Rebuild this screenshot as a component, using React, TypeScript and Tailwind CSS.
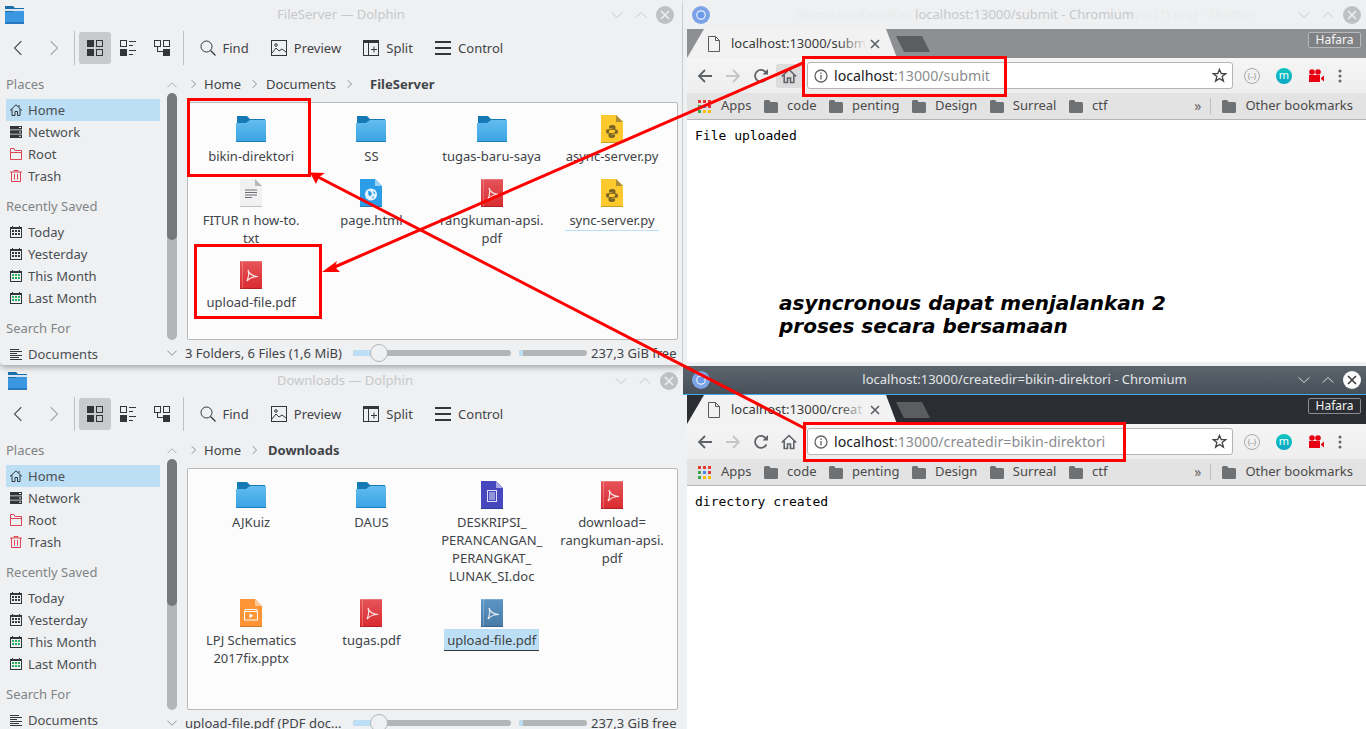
import type { ReactNode } from 'react';

type FileKind = 'folder' | 'pdf' | 'pdfsel' | 'py' | 'txt' | 'html' | 'doc' | 'pptx';

interface FileItem {
  name: string;
  kind: FileKind;
  hover?: boolean;
  selected?: boolean;
}

const TOP_FILES: FileItem[] = [
  { name: 'bikin-direktori', kind: 'folder' },
  { name: 'SS', kind: 'folder' },
  { name: 'tugas-baru-saya', kind: 'folder' },
  { name: 'async-server.py', kind: 'py' },
  { name: 'FITUR n how-to.\ntxt', kind: 'txt' },
  { name: 'page.html', kind: 'html' },
  { name: 'rangkuman-apsi.\npdf', kind: 'pdf' },
  { name: 'sync-server.py', kind: 'py', hover: true },
  { name: 'upload-file.pdf', kind: 'pdf' },
];

const BOTTOM_FILES: FileItem[] = [
  { name: 'AJKuiz', kind: 'folder' },
  { name: 'DAUS', kind: 'folder' },
  { name: 'DESKRIPSI_\nPERANCANGAN_\nPERANGKAT_\nLUNAK_SI.doc', kind: 'doc' },
  { name: 'download=\nrangkuman-apsi.\npdf', kind: 'pdf' },
  { name: 'LPJ Schematics\n2017fix.pptx', kind: 'pptx' },
  { name: 'tugas.pdf', kind: 'pdf' },
  { name: 'upload-file.pdf', kind: 'pdfsel', selected: true },
];

const BOOKMARKS = ['code', 'penting', 'Design', 'Surreal', 'ctf'];

function PageShape({ color, fold, children }: { color: string; fold: string; children?: ReactNode }) {
  return (
    <svg width="22" height="28" viewBox="0 0 22 28">
      <path d="M0 0H15L22 7V28H0Z" fill={color} />
      <path d="M0 27H22V28H0Z" fill="#000" opacity="0.2" />
      <path d="M15 0L22 7H15Z" fill={fold} />
      {children}
    </svg>
  );
}

function PdfIcon({ color, top }: { color: string; top: string }) {
  return (
    <svg width="22" height="28" viewBox="0 0 22 28">
      <defs>
        <linearGradient id={`pdf${color.slice(1)}`} x1="0" y1="0" x2="0" y2="1">
          <stop offset="0" stopColor={top} />
          <stop offset="1" stopColor={color} />
        </linearGradient>
      </defs>
      <rect width="22" height="28" fill={`url(#pdf${color.slice(1)})`} />
      <rect width="22" height="1" fill="#fff" opacity="0.2" />
      <rect x="2" width="1" height="28" fill="#fff" opacity="0.25" />
      <rect y="27" width="22" height="1" fill="#000" opacity="0.2" />
      <path d="M8 9C9 13 12 15 18 15.500C13 15.500 10 16.500 7 20C8.500 16.500 9.500 13 8 9Z" fill="none" stroke="#fff" strokeWidth="1.200" opacity="0.85" />
    </svg>
  );
}

const PY_HALF = 'M11 10C8.500 10 8 11 8 12V13.500H11.500V14.200H6.500C5.500 14.200 5 15 5 16.200C5 17.500 5.500 18.500 6.500 18.500H8V16.500C8 15.500 9 15 10 15H13C14 15 14.500 14.500 14.500 13.500V12C14.500 10.500 13 10 11 10Z';

function FileIcon({ kind }: { kind: FileKind }) {
  if (kind === 'folder') {
    return (
      <svg width="30" height="26" viewBox="0 0 30 26">
        <defs>
          <linearGradient id="fold" x1="0" y1="0" x2="0" y2="1">
            <stop offset="0" stopColor="#62bcf0" />
            <stop offset="1" stopColor="#3aa3e3" />
          </linearGradient>
        </defs>
        <path d="M1 0H11L14 3H29V8H1Z" fill="#1479b5" />
        <path d="M0 7H10L14 4H30V26H0Z" fill="url(#fold)" />
        <rect y="25" width="30" height="1" fill="#1a80bf" />
      </svg>
    );
  }
  if (kind === 'pdf') return <PdfIcon color="#d92b2f" top="#e5555a" />;
  if (kind === 'pdfsel') return <PdfIcon color="#487aa6" top="#5b96c6" />;
  if (kind === 'py') {
    return (
      <PageShape color="#fdc92c" fold="#a88c3a">
        <g fill="#7d6526">
          <path d={PY_HALF} />
          <path d={PY_HALF} transform="rotate(180 11 16.500)" />
        </g>
      </PageShape>
    );
  }
  if (kind === 'txt') {
    return (
      <PageShape color="#f1f1f1" fold="#b8b8b8">
        <path d="M5 11H17M5 13.500H17M5 16H17M5 18.500H12" stroke="#6b6f73" strokeWidth="1" />
      </PageShape>
    );
  }
  if (kind === 'html') {
    return (
      <PageShape color="#2b9de6" fold="#9ad1f4">
        <circle cx="11" cy="15.500" r="6" fill="#e6f4fd" />
        <path d="M8 12L11 12.500L12 15L10 17.500L8.500 16ZM13 11.500L15.500 14L14 15.500ZM12 18L14 17L13 20Z" fill="#2b9de6" />
      </PageShape>
    );
  }
  if (kind === 'doc') {
    return (
      <PageShape color="#4547bd" fold="#a9a9e6">
        <rect x="6.500" y="9.500" width="9" height="11" fill="none" stroke="#dfe0f7" strokeWidth="1" />
        <path d="M8 12H14M8 14H14M8 16H14M8 18H14" stroke="#dfe0f7" strokeWidth="1" />
      </PageShape>
    );
  }
  return (
    <PageShape color="#fd9537" fold="#fdc795">
      <path d="M5 12.500V10.500H17V12.500M4.500 12.500H17.500V21H4.500Z" fill="none" stroke="#fff" strokeWidth="1" />
      <path d="M9.500 14.500L13.500 16.700L9.500 19Z" fill="#fff" />
    </PageShape>
  );
}

function Chevron({ dir, className }: { dir: 'left' | 'right' | 'up' | 'down'; className?: string }) {
  const d = {
    left: 'M10 2L4 8L10 14',
    right: 'M6 2L12 8L6 14',
    up: 'M2 11L8 5L14 11',
    down: 'M2 5L8 11L14 5',
  }[dir];
  return (
    <svg viewBox="0 0 16 16" className={className} fill="none" stroke="currentColor" strokeWidth="1">
      <path d={d} />
    </svg>
  );
}

function WinButtons({ dark }: { dark?: boolean }) {
  return (
    <div className={`flex items-center justify-end gap-[10px] ${dark ? 'text-[#eff0f1]' : 'text-[#bdc1c4]'}`}>
      <Chevron dir="down" className="w-[14px] h-[14px]" />
      <Chevron dir="up" className="w-[14px] h-[14px]" />
      <svg viewBox="0 0 18 18" className="w-[18px] h-[18px] -ml-[2px]">
        <circle cx="9" cy="9" r="9" fill={dark ? '#fcfcfc' : '#bdc1c4'} />
        <path d="M5 5L13 13M13 5L5 13" stroke={dark ? '#31363b' : '#eff0f1'} strokeWidth="1.500" />
      </svg>
    </div>
  );
}

function TitleFolder() {
  return (
    <svg width="19" height="18" viewBox="0 0 19 18">
      <path d="M0 0H8L10 2H19V6H0Z" fill="#1b6ea8" />
      <rect y="3" width="19" height="2" fill="#d7e6f2" />
      <path d="M0 6H7L9 5H19V18H0Z" fill="#3a97e0" />
      <rect y="16" width="19" height="2" fill="#2a78c0" />
    </svg>
  );
}

function ViewIcon({ type }: { type: 'icons' | 'compact' | 'details' }) {
  return (
    <svg viewBox="0 0 16 16" className="w-4 h-4" fill="#31363b">
      {type === 'icons' && (
        <path fillRule="evenodd" d="M0 0H7V7H0ZM9 0H16V7H9ZM10 1V6H15V1ZM0 9H7V16H0ZM9 9H16V16H9ZM10 10V15H15V10Z" />
      )}
      {type === 'compact' && (
        <path fillRule="evenodd" d="M0 0H7V7H0ZM1 1V6H6V1ZM9 1H16V2H9ZM9 5H13V6H9ZM0 9H7V16H0ZM9 10H16V11H9ZM9 14H13V15H9Z" />
      )}
      {type === 'details' && (
        <path fillRule="evenodd" d="M0 0H7V7H0ZM1 1V6H6V1ZM9 0H16V7H9ZM10 1V6H15V1ZM3 7H4V11H9V9H16V16H9V12H3Z" />
      )}
    </svg>
  );
}

function ToolAction({ label, icon }: { label: string; icon: ReactNode }) {
  return (
    <div className="flex items-center gap-[7px] text-[#3f4449]">
      {icon}
      <span className="pt-[2px]">{label}</span>
    </div>
  );
}

function DolphinToolbar() {
  return (
    <div className="h-[37px] flex items-center pl-[2px] text-[13px] shrink-0">
      <div className="w-[34px] flex justify-center text-[#4d5257]">
        <Chevron dir="left" className="w-[18px] h-[18px]" />
      </div>
      <div className="w-[34px] flex justify-center text-[#a5a8ab]">
        <Chevron dir="right" className="w-[18px] h-[18px]" />
      </div>
      <div className="w-px h-[34px] bg-[#bdc1c4] ml-[4px]" />
      <div className="w-[32px] h-[32px] rounded-[3px] bg-[#c9cacb] ml-[4px] flex items-center justify-center">
        <ViewIcon type="icons" />
      </div>
      <div className="w-[34px] flex justify-center">
        <ViewIcon type="compact" />
      </div>
      <div className="w-[34px] flex justify-center">
        <ViewIcon type="details" />
      </div>
      <div className="w-px h-[34px] bg-[#bdc1c4] ml-[4px]" />
      <div className="flex items-center gap-[22.2px] ml-[15.500px]">
        <ToolAction
          label="Find"
          icon={
            <svg viewBox="0 0 16 16" className="w-4 h-4" fill="none" stroke="#31363b" strokeWidth="1">
              <circle cx="6.500" cy="6.500" r="5.500" />
              <path d="M10.500 10.500L15.500 15.500" strokeWidth="1.300" />
            </svg>
          }
        />
        <ToolAction
          label="Preview"
          icon={
            <svg viewBox="0 0 16 16" className="w-4 h-4" fill="none" stroke="#31363b" strokeWidth="1">
              <rect x="0.500" y="0.500" width="15" height="15" />
              <path d="M1 13L5 8L8 11L11 9L15 12" />
              <circle cx="5" cy="5" r="1.300" />
            </svg>
          }
        />
        <ToolAction
          label="Split"
          icon={
            <svg viewBox="0 0 16 16" className="w-4 h-4" fill="none" stroke="#31363b" strokeWidth="1">
              <rect x="0.500" y="0.500" width="15" height="15" />
              <path d="M5.500 3V16M8 9.500H14M11 6.500V12.500" />
              <rect x="0" y="0" width="16" height="3" fill="#31363b" stroke="none" />
            </svg>
          }
        />
        <ToolAction
          label="Control"
          icon={
            <svg viewBox="0 0 16 16" className="w-4 h-4" fill="#31363b">
              <path d="M0 1H16V3H0ZM0 7H16V9H0ZM0 13H16V15H0Z" />
            </svg>
          }
        />
      </div>
    </div>
  );
}

function PlaceIcon({ type }: { type: string }) {
  if (type === 'home') {
    return (
      <svg viewBox="0 0 12 12" className="w-3 h-3" fill="none" stroke="#31363b" strokeWidth="1">
        <path d="M0 6.500L6 0.800L12 6.500M2 5V11.500H5V7.500H7.500V11.500H10V5M9 1V3" />
      </svg>
    );
  }
  if (type === 'network') {
    return (
      <svg viewBox="0 0 12 12" className="w-3 h-3" fill="#31363b">
        <path d="M0 0H12V3.500H0ZM0 4.250H12V7.750H0ZM0 8.500H12V12H0Z" />
        <path d="M9 1H11V2H9ZM9 5.500H11V6.500H9ZM9 9.800H11V10.800H9Z" fill="#eff0f1" />
      </svg>
    );
  }
  if (type === 'root') {
    return (
      <svg viewBox="0 0 12 12" className="w-3 h-3" fill="none" stroke="#da4453" strokeWidth="1">
        <path d="M0.500 1V11.500H11.500V2.500H5L4 0.500H0.500ZM0.500 4.500H11.500" />
      </svg>
    );
  }
  if (type === 'trash') {
    return (
      <svg viewBox="0 0 12 12" className="w-3 h-3" fill="none" stroke="#da4453" strokeWidth="1">
        <path d="M0 2H12M4 2V0.500H8V2M1.500 2V11.500H10.500V2M4.500 4V9.500M7.500 4V9.500" />
      </svg>
    );
  }
  if (type === 'docs') {
    return (
      <svg viewBox="0 0 12 12" className="w-3 h-3" fill="none" stroke="#31363b" strokeWidth="1">
        <path d="M0 1.500H9M0 3.500H12M0 5.500H7M0 7.500H12M0 9.500H9M0 11.500H12" />
      </svg>
    );
  }
  const cell = type === 'cal-green' ? '#27ae60' : '#31363b';
  return (
    <svg viewBox="0 0 12 12" className="w-3 h-3">
      <path fillRule="evenodd" d="M0 1H2V0H3V1H9V0H10V1H12V12H0ZM1 3V11H11V3Z" fill="#31363b" />
      <path d="M2 4H4V6H2ZM5 4H7V6H5ZM8 4H10V6H8ZM2 7H4V9H2ZM5 7H7V9H5ZM8 7H10V9H8Z" fill={cell} />
    </svg>
  );
}

function PlaceSection({ title, rows, active }: { title: string; rows: [string, string][]; active?: string }) {
  return (
    <div className="mb-[10px]">
      <div className="h-[18px] leading-[18px] text-[#7f8486] mb-[6px]">{title}</div>
      {rows.map(([label, icon]) => (
        <div
          key={label}
          className={`h-[22px] w-[154px] flex items-center gap-[6px] pl-[4px] text-[#4a4f54] ${active === label ? 'bg-[#bddff5]' : ''}`}
        >
          <PlaceIcon type={icon} />
          <span className="leading-[18px]">{label}</span>
        </div>
      ))}
    </div>
  );
}

function Sidebar() {
  return (
    <div className="w-[167px] shrink-0 pl-[6px] pt-[9px] text-[13px] overflow-hidden">
      <PlaceSection
        title="Places"
        active="Home"
        rows={[
          ['Home', 'home'],
          ['Network', 'network'],
          ['Root', 'root'],
          ['Trash', 'trash'],
        ]}
      />
      <PlaceSection
        title="Recently Saved"
        rows={[
          ['Today', 'cal'],
          ['Yesterday', 'cal'],
          ['This Month', 'cal-green'],
          ['Last Month', 'cal-green'],
        ]}
      />
      <PlaceSection title="Search For" rows={[['Documents', 'docs']]} />
    </div>
  );
}

function SideScroll() {
  return (
    <div className="w-[10px] shrink-0 mr-[8px] flex flex-col items-center text-[#6b7075]">
      <div className="h-[27px] flex items-end pb-[2px] text-[#9a9da0]">
        <Chevron dir="up" className="w-[12px] h-[12px] -mx-[1px]" />
      </div>
      <div className="flex-1 w-[10px] rounded-[5px] bg-[#b4b5b6] overflow-hidden">
        <div className="h-[147px] rounded-[5px] bg-[#77787c]" />
      </div>
      <div className="h-[25px] flex items-center">
        <Chevron dir="down" className="w-[12px] h-[12px] -mx-[1px]" />
      </div>
    </div>
  );
}

function FileCell({ item }: { item: FileItem }) {
  let label = 'mt-[4px] px-[3px]';
  if (item.selected) label = 'mt-[2px] pt-[2px] pb-[1px] px-[3px] bg-[#bddff5] border-b border-[#31363b]';
  if (item.hover) label = 'mt-[4px] px-[4px] pb-[1px] border-b border-[#bddff5]';
  return (
    <div className="flex flex-col items-center pb-[14px]">
      <div className="h-[28px] flex items-end">
        <div className={item.kind === 'folder' ? 'mb-[1px]' : ''}>
          <FileIcon kind={item.kind} />
        </div>
      </div>
      <div className={`text-center leading-[18px] whitespace-pre-line text-[#3f4449] ${label}`}>{item.name}</div>
    </div>
  );
}

function Breadcrumb({ path, current, currentClass }: { path: string[]; current: string; currentClass: string }) {
  return (
    <div className="h-[36px] shrink-0 flex items-center text-[13px] text-[#3f4449] pl-[3px]">
      <Chevron dir="right" className="w-[10px] h-[10px] text-[#4d5257] mr-[6px]" />
      {path.map(p => (
        <div key={p} className="flex items-center">
          <span className="pt-[2px]">{p}</span>
          <Chevron dir="right" className="w-[10px] h-[10px] text-[#4d5257] mx-[7.500px]" />
        </div>
      ))}
      <span className={`font-bold pt-[2px] ${currentClass}`}>{current}</span>
    </div>
  );
}

function StatusBar({ text }: { text: string }) {
  return (
    <div className="h-[25px] shrink-0 flex items-center text-[13px] leading-[12px] text-[#3f4449]">
      <div className="w-[168px] whitespace-nowrap">{text}</div>
      <div className="relative w-[158px] h-[6px] rounded-[3px] bg-[#b4b5b6]">
        <div className="w-[26px] h-[6px] rounded-l-[3px] bg-[#bddff5]" />
        <div className="absolute left-[17px] -top-[6px] w-[18px] h-[18px] rounded-full bg-[#eff0f1] border border-[#b4b5b6]" />
      </div>
      <div className="ml-[8px] w-[68px] h-[6px] rounded-[3px] bg-[#b4b5b6] overflow-hidden">
        <div className="w-[4px] h-[6px] bg-[#bddff5]" />
      </div>
      <span className="ml-[4px] whitespace-nowrap">237,3 GiB free</span>
    </div>
  );
}

function DolphinWindow({
  title,
  path,
  current,
  currentClass,
  files,
  status,
  headClass,
  titleClass,
  rootClass,
}: {
  title: string;
  path: string[];
  current: string;
  currentClass: string;
  files: FileItem[];
  status: string;
  headClass: string;
  titleClass: string;
  rootClass: string;
}) {
  return (
    <div className={`absolute left-0 flex flex-col bg-[#eff0f1] font-['Noto_Sans',sans-serif] ${rootClass}`}>
      <div className={`h-[29px] shrink-0 grid grid-cols-[1fr_auto_1fr] items-center ${headClass}`}>
        <TitleFolder />
        <span className={`text-[13px] text-[#c6c9cb] ${titleClass}`}>{title}</span>
        <WinButtons />
      </div>
      <div className="w-[682px] flex-1 flex flex-col min-h-0">
        <DolphinToolbar />
        <div className="flex-1 flex min-h-0">
          <Sidebar />
          <SideScroll />
          <div className="flex-1 flex flex-col min-w-0 pr-[4px]">
            <Breadcrumb path={path} current={current} currentClass={currentClass} />
            <div className="flex-1 ml-[2px] bg-[#fcfcfc] border border-[#b8b9ba] rounded-[2px] pl-[3px] pt-[12px] overflow-hidden text-[13px]">
              <div className="grid grid-cols-[repeat(4,120.3px)]">
                {files.map(f => (
                  <FileCell key={f.name} item={f} />
                ))}
              </div>
            </div>
            <StatusBar text={status} />
          </div>
        </div>
      </div>
    </div>
  );
}

function ChromiumLogo() {
  return (
    <svg width="18" height="18" viewBox="0 0 18 18">
      <circle cx="9" cy="9" r="9" fill="#7ba3e6" />
      <circle cx="9" cy="9" r="4.800" fill="#e8eef9" />
      <circle cx="9" cy="9" r="3.600" fill="#6a9ae8" />
    </svg>
  );
}

function BookmarkFolder() {
  return (
    <svg width="14" height="13" viewBox="0 0 15 13" fill="#6f7275" preserveAspectRatio="none">
      <path d="M0 1.500Q0 0 1.500 0H5.500L7 2H13.500Q15 2 15 3.500V11.500Q15 13 13.500 13H1.500Q0 13 0 11.500Z" />
    </svg>
  );
}

function AppsGrid() {
  const colors = ['#e53935', '#e53935', '#e53935', '#43a047', '#4285f4', '#e53935', '#34a853', '#fbbc05', '#fbbc05'];
  return (
    <div className="grid grid-cols-3 gap-[2px] w-[13px]">
      {colors.map((c, i) => (
        <div key={i} className="w-[3px] h-[3px]" style={{ backgroundColor: c }} />
      ))}
    </div>
  );
}

function NavIcons({ hoverHome }: { hoverHome: boolean }) {
  return (
    <div className="flex items-center shrink-0 pl-[4px]">
      <div className="w-[28px] flex justify-center">
        <svg viewBox="0 0 16 16" className="w-4 h-4" fill="none" stroke="#5f6368" strokeWidth="1.800">
          <path d="M15 8H2M8 2L2 8L8 14" />
        </svg>
      </div>
      <div className="w-[28px] flex justify-center">
        <svg viewBox="0 0 16 16" className="w-4 h-4" fill="none" stroke="#c4c6c8" strokeWidth="1.800">
          <path d="M1 8H14M8 2L14 8L8 14" />
        </svg>
      </div>
      <div className="w-[28px] flex justify-center">
        <svg viewBox="0 0 16 16" className="w-4 h-4" fill="none" stroke="#5f6368" strokeWidth="1.800">
          <path d="M13.500 10.500A6 6 0 1 1 13 4.500" />
          <path d="M15 1V6.500H9.500Z" fill="#5f6368" stroke="none" />
        </svg>
      </div>
      <div className={`w-[26px] h-[24px] ml-[1px] rounded-[2px] flex items-center justify-center ${hoverHome ? 'bg-[#dcdcdc]' : ''}`}>
        <svg viewBox="0 0 16 16" className="w-4 h-4" fill="none" stroke="#5f6368" strokeWidth="1.600">
          <path d="M0.800 8.500L8 1.500L15.200 8.500M3.200 7V14.500H6.500V10H9.500V14.500H12.800V7" />
        </svg>
      </div>
    </div>
  );
}

function ChromiumWindow({
  host,
  rest,
  tabTitle,
  message,
  active,
  ghostBefore,
  ghostAfter,
  rootClass,
}: {
  host: string;
  rest: string;
  tabTitle: string;
  message: string;
  active?: boolean;
  ghostBefore?: string;
  ghostAfter?: string;
  rootClass: string;
}) {
  return (
    <div className={`absolute left-[683px] w-[683px] flex flex-col bg-[#eff0f1] font-['Noto_Sans',sans-serif] ${rootClass}`}>
      <div
        className={`h-[29px] shrink-0 grid grid-cols-[1fr_auto_1fr] items-center pl-[9px] pr-[5px] ${
          active ? 'bg-gradient-to-b from-[#5c646c] to-[#48505a] border-b border-[#3daee9]' : 'bg-[#eff0f1]'
        }`}
      >
        <ChromiumLogo />
        <span className={`relative text-[13px] pr-[4px] whitespace-nowrap ${active ? 'text-[#e3e5e7]' : 'text-[#c6c9cb]'}`}>
          {ghostBefore && <span className="absolute right-full top-0 text-[#e9ebec]">{ghostBefore}</span>}
          {`${host}${rest} - Chromium`}
          {ghostAfter && <span className="absolute left-full top-0 -ml-[4px] text-[#e9ebec]">{ghostAfter}</span>}
        </span>
        <WinButtons dark={active} />
      </div>
      <div className="flex-1 flex flex-col ml-[4px] min-h-0">
        <div className={`h-[29px] shrink-0 flex items-end justify-between pr-[5px] ${active ? 'bg-[#2a2e32]' : 'bg-[#8e8f92]'}`}>
          <div className="flex items-end">
            <div className="w-[210px] h-[29px] bg-[#f2f2f2] [clip-path:polygon(0_100%,17px_0,199px_0,210px_100%)] flex items-center pl-[20px]">
              <svg width="14" height="16" viewBox="0 0 14 16" fill="none" stroke="#5a5a5a" strokeWidth="1" className="shrink-0">
                <path d="M1.500 0.500H8.500L12.500 4.500V15.500H1.500ZM8.500 0.500V4.500H12.500" />
              </svg>
              <div className="relative ml-[10px] w-[136px] whitespace-nowrap text-[13px] text-[#3a3a3a]">
                {tabTitle}
                <div className="absolute right-0 inset-y-0 w-[28px] bg-gradient-to-r from-transparent to-[#f2f2f2]" />
              </div>
              <svg width="10" height="10" viewBox="0 0 10 10" stroke="#5f6368" strokeWidth="1.700" className="ml-[3px] shrink-0">
                <path d="M1 1L9 9M9 1L1 9" />
              </svg>
            </div>
            <div className="w-[34px] h-[16px] mb-[6px] -ml-[1px] bg-[#5c5d60] [clip-path:polygon(0_0,26px_0,34px_100%,8px_100%)]" />
          </div>
          <div
            className={`h-[16px] w-[53px] mb-[10px] rounded-[2px] border text-[12px] leading-[14px] text-center ${
              active ? 'border-[#8a8c8e] text-[#f2f2f2]' : 'border-[#b6b7b9] bg-[#808184] text-[#f7f7f7]'
            }`}
          >
            Hafara
          </div>
        </div>
        <div className="h-[35px] shrink-0 flex items-center bg-gradient-to-b from-[#f5f5f5] to-[#eeeeee]">
          <NavIcons hoverHome={!active} />
          <div className="w-[426px] h-[27px] ml-[5px] bg-white border border-[#b4b4b4] rounded-[3px] flex items-center pl-[6px] pr-[5px]">
            <svg viewBox="0 0 14 14" className="w-[14px] h-[14px] shrink-0" fill="none" stroke="#5f6368" strokeWidth="1.300">
              <circle cx="7" cy="7" r="6" />
              <path d="M7 6V10.500M7 3.500V5" />
            </svg>
            <span className="ml-[6px] text-[14.200px] text-[#202124] whitespace-nowrap">
              {host}
              <span className="text-[#8a8c8f]">{rest}</span>
            </span>
            <svg viewBox="0 0 16 16" className="ml-auto w-[15px] h-[15px]" fill="none" stroke="#444" strokeWidth="1.400">
              <path d="M8 1.500L9.900 6H14.700L10.800 9.100L12.200 14L8 11.200L3.800 14L5.200 9.100L1.300 6H6.100Z" />
            </svg>
          </div>
          <div className="flex items-center pl-[10px]">
            <div className="w-[16px] h-[16px] rounded-full border border-[#a9a9a9] text-[7px] leading-[14px] text-center text-[#888] ml-[1px]">{'{..}'}</div>
            <div className="w-[16px] h-[16px] rounded-full bg-gradient-to-b from-[#11c6bd] to-[#0aa6c4] text-[11px] leading-[14px] text-center text-white ml-[16px]">m</div>
            <svg width="16" height="14" viewBox="0 0 16 14" fill="#e60012" className="ml-[16px]">
              <circle cx="4" cy="3" r="2.800" />
              <circle cx="10" cy="3" r="2.800" />
              <path d="M1 6H12V13H1ZM13 9L16 6.500V12.500L13 10Z" />
            </svg>
            <svg width="4" height="14" viewBox="0 0 4 14" fill="#666" className="ml-[14px]">
              <circle cx="2" cy="2" r="1.500" />
              <circle cx="2" cy="7" r="1.500" />
              <circle cx="2" cy="12" r="1.500" />
            </svg>
          </div>
        </div>
        <div className="h-[27px] shrink-0 flex items-center bg-[#e3e3e3] border-b border-[#b4b4b4] pl-[11px] pr-[13px] text-[13px] text-[#4a4a4a]">
          <div className="flex items-center gap-[12.5px]">
            <div className="flex items-center gap-[10px]">
              <AppsGrid />
              <span>Apps</span>
            </div>
            {BOOKMARKS.map(b => (
              <div key={b} className="flex items-center gap-[9px]">
                <BookmarkFolder />
                <span>{b}</span>
              </div>
            ))}
          </div>
          <span className="ml-auto text-[14px] leading-none text-[#666]">»</span>
          <div className="w-px h-[16px] bg-[#bdbdbd] ml-[9px]" />
          <div className="flex items-center gap-[9px] ml-[11px]">
            <BookmarkFolder />
            <span>Other bookmarks</span>
          </div>
        </div>
        <div className="flex-1 bg-white p-[8px] min-h-0">
          <pre className="font-['DejaVu_Sans_Mono',monospace] text-[13px] leading-[15px] text-black">{message}</pre>
        </div>
      </div>
    </div>
  );
}

export default function App() {
  return (
    <div className="relative w-[1366px] h-[729px] overflow-hidden bg-[#eff0f1]">
      <DolphinWindow
        title="Downloads — Dolphin"
        path={['Home']}
        current="Downloads"
        currentClass="ml-[2px]"
        files={BOTTOM_FILES}
        status="upload-file.pdf (PDF doc..."
        headClass="pl-[8px] pr-[8px]"
        titleClass="pl-[4px]"
        rootClass="top-[366px] w-[686px] h-[369px]"
      />
      <ChromiumWindow
        host="localhost"
        rest=":13000/createdir=bikin-direktori"
        tabTitle="localhost:13000/creat"
        message="directory created"
        active
        rootClass="top-[366px] h-[363px]"
      />
      <DolphinWindow
        title="FileServer — Dolphin"
        path={['Home', 'Documents']}
        current="FileServer"
        currentClass="ml-[9px]"
        files={TOP_FILES}
        status="3 Folders, 6 Files (1,6 MiB)"
        headClass="pl-[5px] pr-[8px]"
        titleClass="pl-[3px]"
        rootClass="top-0 w-[682px] h-[365px] rounded-b-[4px] shadow-[0_2px_6px_rgba(0,0,0,0.35)]"
      />
      <ChromiumWindow
        host="localhost"
        rest=":13000/submit"
        tabTitle="localhost:13000/subm"
        message="File uploaded"
        ghostBefore="/home/arafaee/Doc"
        ghostAfter="ync(1).png - Shutter"
        rootClass="top-0 h-[365px] pb-[3px]"
      />

      {/* anotasi merah di atas screenshot */}
      <div className="absolute left-[187px] top-[98px] w-[124px] h-[79px] border-[3px] border-[#ff0000]" />
      <div className="absolute left-[194px] top-[244px] w-[128px] h-[75px] border-[3px] border-[#ff0000]" />
      <div className="absolute left-[802px] top-[56px] w-[205px] h-[41px] border-[3px] border-[#ff0000]" />
      <div className="absolute left-[803px] top-[422px] w-[323px] h-[40px] border-[3px] border-[#ff0000]" />
      <svg className="absolute inset-0 pointer-events-none" width="1366" height="729" viewBox="0 0 1366 729">
        <path d="M803 63L330 269" stroke="#ff0000" strokeWidth="3" />
        <path d="M322 272L337 261L335 267L340 272Z" fill="#ff0000" />
        <path d="M806 429L318 177" stroke="#ff0000" strokeWidth="3" />
        <path d="M310 172.500L325 173L319 177L316 184Z" fill="#ff0000" />
      </svg>
      <div className="absolute left-[779px] top-[292px] font-['DejaVu_Sans',sans-serif] font-bold italic text-[20px] leading-[23px] text-black">
        asyncronous dapat menjalankan 2
        <br />
        proses secara bersamaan
      </div>
    </div>
  );
}
